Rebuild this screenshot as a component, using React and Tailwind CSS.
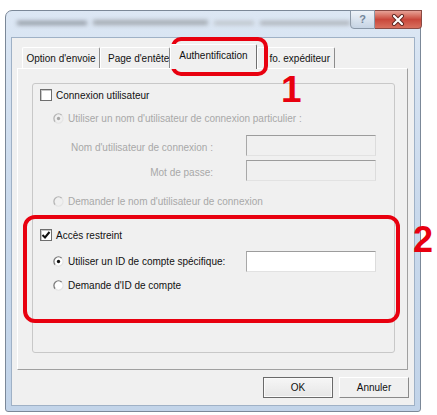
import React from 'react'

const Check = ({ checked }) => (
    <span className="flex h-[12px] w-[12px] items-center justify-center border border-[#6e6e6e] bg-white shadow-[inset_1px_1px_0_#c8c8c8]">
        {checked && (
            <svg width="10" height="10" viewBox="0 0 10 10">
                <path d="M1.5 5 L4 7.5 L8.5 2" fill="none" stroke="#111" strokeWidth="2" />
            </svg>
        )}
    </span>
)

const Radio = ({ checked, disabled }) => (
    <svg width="11" height="11" viewBox="0 0 12 12" className="shrink-0">
        <circle cx="6" cy="6" r="5" fill={disabled ? '#f0f0f0' : '#ffffff'} />
        <path d="M2.46 9.54 A5 5 0 0 1 9.54 2.46" fill="none" stroke={disabled ? '#b4b4b4' : '#7a7a7a'} strokeWidth="1.4" />
        <path d="M9.54 2.46 A5 5 0 0 1 2.46 9.54" fill="none" stroke="#e4e4e4" strokeWidth="1.2" />
        {checked && <circle cx="6" cy="6" r="1.8" fill={disabled ? '#a8a8a8' : '#111'} />}
    </svg>
)

const Field = ({ disabled }) => (
    <div className={`h-[21px] w-[130px] border border-t-[#9c9c9c] border-l-[#a8a8a8] border-r-[#dcdcdc] border-b-[#e2e2e2] ${disabled ? 'bg-[#f0f0f0]' : 'bg-white'}`} />
)

const Tab = ({ label, className }) => (
    <div className={`flex h-[21px] items-center border-t border-l border-r border-t-white border-l-white border-r-[#8c8c8c] rounded-t-[2px] ${className}`}>
        {label}
    </div>
)

const App = () => {
    return (
        <div className="relative h-[415px] w-[437px] overflow-hidden bg-white pl-[5px] pt-[10px] text-[10px] text-[#111] font-['Liberation_Sans',Arial,sans-serif]">
            {/* window frame */}
            <div className="flex h-[402px] w-[416px] flex-col rounded-t-[7px] rounded-b-[3px] border border-[#7b8898] bg-gradient-to-b from-[#dce7f4] via-[#c9d9ec] to-[#c2d4e9]">
                {/* title bar (blurred title) */}
                <div className="flex h-[26px] items-start justify-between pl-[11px] pr-[5px]">
                    <div className="mt-[9px] flex items-center gap-[6px] blur-[2px]">
                        <div className="h-[4px] w-[70px] bg-[#8f969f]" />
                        <div className="h-[5px] w-[115px] bg-[#a3a9b0]" />
                        <div className="h-[4px] w-[40px] bg-[#bcc1c7]" />
                        <div className="h-[4px] w-[90px] bg-[#a9aeb4]" />
                    </div>
                    <div className="-mt-px flex">
                        <div className="flex h-[19px] w-[25px] items-center justify-center rounded-bl-[4px] border border-[#8a98a8] bg-gradient-to-b from-[#eef3f9] to-[#c6d4e4] text-[11px] font-bold text-[#74869a]">
                            ?
                        </div>
                        <div className="flex h-[19px] w-[47px] items-center justify-center rounded-br-[4px] border border-l-0 border-[#8a4a44] bg-gradient-to-b from-[#e6a196] via-[#c9473b] to-[#d8705f]">
                            <svg width="14" height="12" viewBox="0 0 14 12">
                                <path d="M3 2 L11 10 M11 2 L3 10" stroke="#5c2520" strokeWidth="4" strokeLinecap="round" />
                                <path d="M3 2 L11 10 M11 2 L3 10" stroke="#ffffff" strokeWidth="2.2" strokeLinecap="round" />
                            </svg>
                        </div>
                    </div>
                </div>

                {/* client area */}
                <div className="ml-[5px] mr-[5px] flex h-[369px] flex-col border border-[#9fb1c6] bg-[#f0f0f0] pt-[6px] pl-[5px] pr-[5px]">
                    {/* tabs */}
                    <div className="flex items-end pl-[5px]">
                        <Tab label="Option d'envoie" className="w-[78px] justify-center" />
                        <Tab label="Page d'entête" className="w-[70px] pl-[7px] overflow-hidden whitespace-nowrap" />
                        <div className="relative z-10 -mb-px flex h-[25px] w-[87px] items-center justify-center rounded-t-[2px] border-t border-l border-r border-t-white border-l-white border-r-[#6f6f6f] bg-[#f0f0f0] pb-[3px]">
                            Authentification
                        </div>
                        <Tab label="fo. expéditeur" className="w-[78px] justify-end pr-[4px]" />
                    </div>

                    {/* tab panel */}
                    <div className="h-[302px] w-[391px] border border-t-white border-l-white border-r-[#a0a0a0] border-b-[#a0a0a0] pl-[14px] pt-[14px]">
                        <div className="flex h-[270px] w-[363px] flex-col rounded-[3px] border border-[#c8c8c8]">
                            {/* Connexion utilisateur */}
                            <div className="flex h-[22px] items-center pl-[7px]">
                                <Check />
                                <span className="ml-[4px]">Connexion utilisateur</span>
                            </div>
                            <div className="mt-[1px] flex h-[22px] items-center pl-[20px] text-[#a8a8a8]">
                                <Radio checked disabled />
                                <span className="ml-[4px]">Utiliser un nom d'utilisateur de connexion particulier :</span>
                            </div>
                            <div className="mt-[6px] flex h-[21px] items-center text-[#a8a8a8]">
                                <span className="w-[180px] pt-[3px] text-right">Nom d'utilisateur de connexion :</span>
                                <div className="ml-[33px]"><Field disabled /></div>
                            </div>
                            <div className="mt-[4px] flex h-[21px] items-center text-[#a8a8a8]">
                                <span className="w-[180px] pt-[3px] text-right">Mot de passe:</span>
                                <div className="ml-[33px]"><Field disabled /></div>
                            </div>
                            <div className="mt-[9px] flex h-[22px] items-center pl-[20px] text-[#a8a8a8]">
                                <Radio disabled />
                                <span className="ml-[4px]">Demander le nom d'utilisateur de connexion</span>
                            </div>

                            {/* Accès restreint */}
                            <div className="mt-[12px] flex h-[22px] items-center pl-[7px]">
                                <Check checked />
                                <span className="ml-[4px]">Accès restreint</span>
                            </div>
                            <div className="mt-[5px] flex h-[21px] items-center pl-[20px]">
                                <Radio checked />
                                <span className="ml-[4px] w-[178px]">Utiliser un ID de compte spécifique:</span>
                                <Field />
                            </div>
                            <div className="mt-[2px] flex h-[22px] items-center pl-[20px]">
                                <Radio />
                                <span className="ml-[4px]">Demande d'ID de compte</span>
                            </div>
                        </div>
                    </div>

                    {/* buttons */}
                    <div className="mt-[7px] flex justify-end gap-[6px]">
                        <button className="h-[21px] w-[70px] border border-[#6a6a6a] bg-gradient-to-b from-[#f6f6f6] to-[#e6e6e6] shadow-[inset_0_0_0_1px_#fafafa]">
                            OK
                        </button>
                        <button className="h-[21px] w-[70px] border border-t-white border-l-white border-r-[#8a8a8a] border-b-[#8a8a8a] bg-[#f0f0f0]">
                            Annuler
                        </button>
                    </div>
                </div>
            </div>

            {/* annotations */}
            <div className="absolute left-[171px] top-[37px] h-[39px] w-[97px] rounded-[10px] border-[4px] border-[#e8000f]" />
            <div className="absolute left-[23px] top-[215px] h-[108px] w-[377px] rounded-[12px] border-[4px] border-[#e8000f]" />
            <div className="absolute left-[281px] top-[71px] text-[37px] font-bold leading-none text-[#e8000f]">1</div>
            <div className="absolute left-[413px] top-[222px] text-[36px] font-bold leading-none text-[#e8000f]">2</div>
        </div>
    )
}

export default App
